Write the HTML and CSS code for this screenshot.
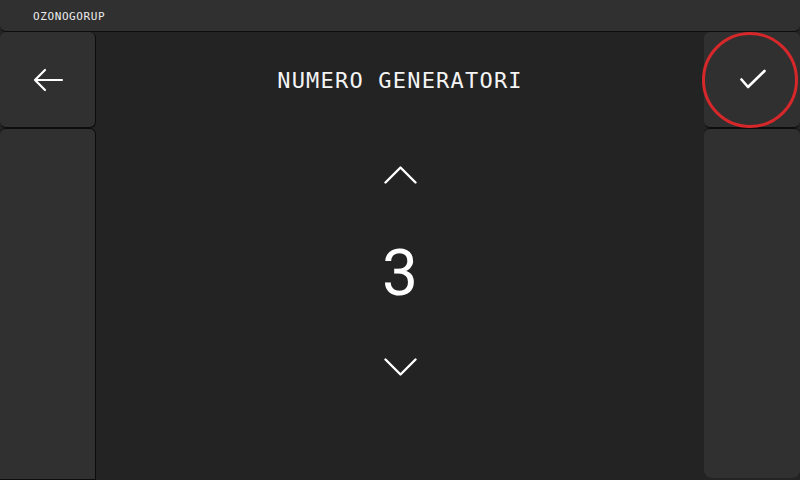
FILE: index.html
```html
<!DOCTYPE html>
<html>
<head>
<meta charset="utf-8">
<link rel="stylesheet" href="styles.css">
</head>
<body>
<div class="screen">
  <header class="topbar"><span class="brand">OZONOGORUP</span></header>
  <div class="main">
    <div class="side">
      <button class="btn btn-top" aria-label="Indietro">
        <svg width="32" height="24" viewBox="0 0 32 24"><path d="M30 12H3M13 2L3 12l10 10" fill="none" stroke="#fff" stroke-width="2.2" stroke-linecap="round" stroke-linejoin="round"/></svg>
      </button>
      <div class="btn btn-fill"></div>
    </div>
    <div class="center">
      <div class="title">NUMERO GENERATORI</div>
      <button class="chev chev-up" aria-label="Aumenta">
        <svg width="33" height="19" viewBox="0 0 33 19"><path d="M1.5 17.5L16.5 2.5l15 15" fill="none" stroke="#fff" stroke-width="2.4" stroke-linecap="round" stroke-linejoin="round"/></svg>
      </button>
      <div class="value">3</div>
      <button class="chev chev-down" aria-label="Diminuisci">
        <svg width="33" height="19" viewBox="0 0 33 19"><path d="M1.5 1.5l15 15 15-15" fill="none" stroke="#fff" stroke-width="2.4" stroke-linecap="round" stroke-linejoin="round"/></svg>
      </button>
    </div>
    <div class="side side-right">
      <button class="btn btn-top" aria-label="Conferma">
        <svg width="26" height="21" viewBox="0 0 26 21"><path d="M1.5 10.5l6.5 7.5L24.5 2" fill="none" stroke="#fff" stroke-width="2.6" stroke-linecap="round" stroke-linejoin="round"/></svg>
        <span class="ring"></span>
      </button>
      <div class="btn btn-fill btn-round-bottom"></div>
    </div>
  </div>
</div>
</body>
</html>
```

FILE: styles.css
```css
* { box-sizing: border-box; }
html, body { margin: 0; padding: 0; }
body {
  width: 800px;
  height: 480px;
  overflow: hidden;
  background: #232323;
  font-family: "DejaVu Sans Mono", "Liberation Mono", monospace;
  color: #fff;
}
.screen {
  width: 800px;
  height: 480px;
  display: flex;
  flex-direction: column;
}
.topbar {
  height: 32px;
  flex: none;
  background: #303030;
  border-bottom: 1px solid #0c0c0c;
  border-radius: 0 0 6px 6px;
  padding-left: 33px;
  padding-top: 2px;
  display: flex;
  align-items: center;
}
.brand {
  font-size: 11px;
  letter-spacing: 0.6px;
  color: #ececec;
}
.main {
  flex: 1;
  display: grid;
  grid-template-columns: 96px 1fr 96px;
  min-height: 0;
}
.side {
  display: flex;
  flex-direction: column;
}
.btn {
  background: #303030;
  border: 1px solid #0c0c0c;
  border-radius: 6px;
  padding: 0;
  margin: 0;
  color: #fff;
}
.btn-top {
  height: 96px;
  flex: none;
  display: flex;
  align-items: center;
  justify-content: center;
  position: relative;
  border-top: none;
}
.side .btn-top svg { display: block; }
.btn-fill {
  flex: 1;
  border-radius: 6px 6px 0 0;
  border-bottom: 1px solid #0c0c0c;
}
.side:first-child .btn { border-left: none; }
.side-right .btn { border-right: none; border-left: none; }
.side-right .btn-top { padding-left: 2px; }
.btn-round-bottom {
  border-radius: 6px 6px 8px 8px;
  margin-bottom: 2px;
  border-bottom: none;
}
.ring {
  position: absolute;
  left: -2px;
  top: 0;
  width: 96px;
  height: 96px;
  border: 3px solid #d6282a;
  border-radius: 50%;
}
.center {
  display: flex;
  flex-direction: column;
  align-items: center;
}
.title {
  height: 96px;
  flex: none;
  display: flex;
  align-items: center;
  font-size: 22px;
  letter-spacing: 1.2px;
  color: #f4f4f4;
}
.chev {
  background: none;
  border: none;
  padding: 0;
  margin: 0;
  display: block;
  line-height: 0;
}
.chev-up { margin-top: 37px; }
.value {
  margin-top: 58px;
  font-family: Roboto, "Liberation Sans", sans-serif;
  font-size: 64px;
  line-height: 64px;
  height: 64px;
}
.chev-down { margin-top: 52px; }
```
